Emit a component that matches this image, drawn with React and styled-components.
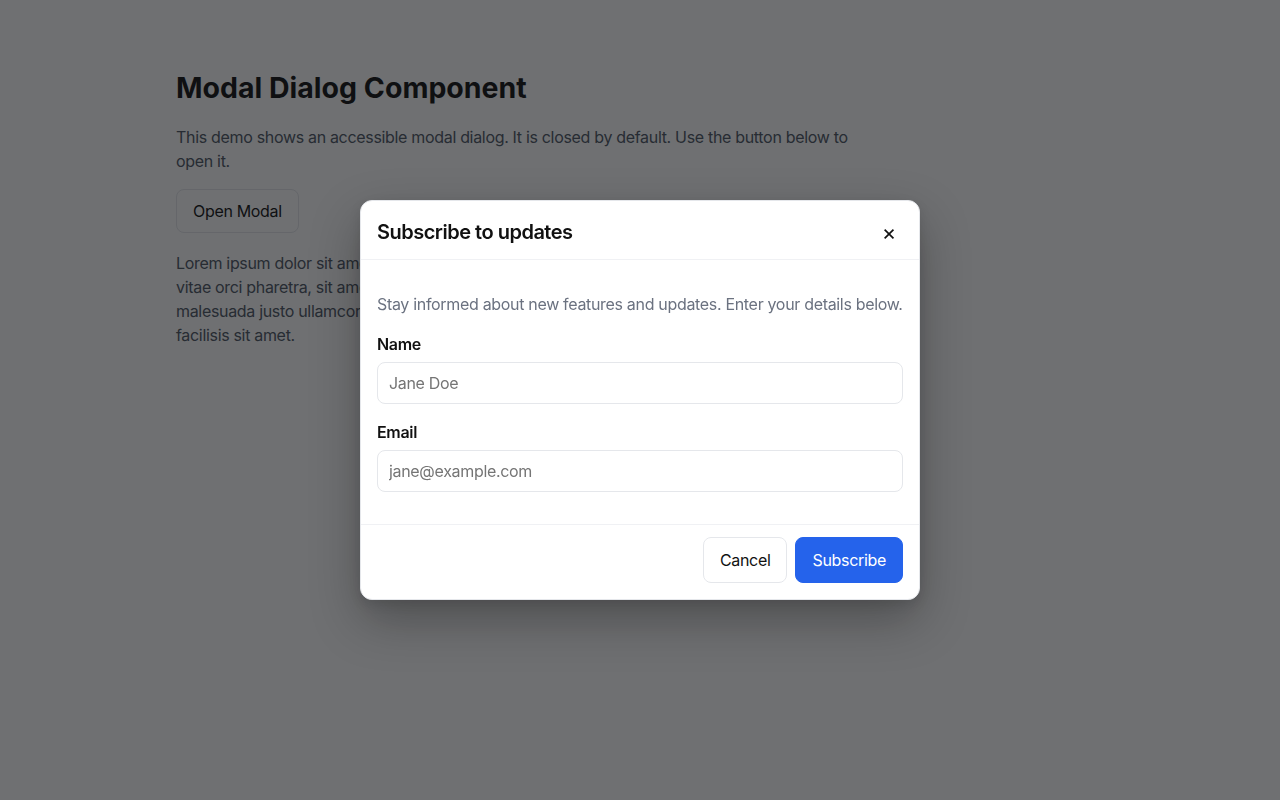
import React, { useState } from 'react'
import styled, { createGlobalStyle } from 'styled-components'

const GlobalStyle = createGlobalStyle`
  * { box-sizing: border-box; }
  html, body {
    margin: 0;
    padding: 0;
    background: #ffffff;
    font-family: Inter, "Liberation Sans", Arial, sans-serif;
    color: #111827;
    letter-spacing: -0.02em;
  }
`

const Page = styled.main`
  max-width: 960px;
  margin: 0 auto;
  padding: 71px 16px 64px;
`

const Title = styled.h1`
  margin: 0 0 20px;
  font-size: 28.5px;
  line-height: 34px;
  font-weight: 700;
  color: #111111;
  letter-spacing: 0;
`

const Text = styled.p`
  max-width: 70ch;
  margin: 0 0 16px;
  font-size: 16px;
  line-height: 24px;
  color: #4b5563;
`

const Button = styled.button`
  display: inline-flex;
  align-items: center;
  justify-content: center;
  height: ${p => (p.$tall ? '46px' : '44px')};
  padding: 0 16px;
  border-radius: 8px;
  border: 1px solid ${p => (p.$primary ? '#2563eb' : '#e5e7eb')};
  background: ${p => (p.$primary ? '#2563eb' : '#ffffff')};
  color: ${p => (p.$primary ? '#ffffff' : '#111111')};
  font-family: inherit;
  font-size: 16px;
  letter-spacing: inherit;
  cursor: pointer;
`

const OpenButton = styled(Button)`
  margin-bottom: 18px;
`

const Overlay = styled.div`
  position: fixed;
  inset: 0;
  display: flex;
  align-items: center;
  justify-content: center;
  background: rgba(15, 16, 20, 0.6);
`

const Dialog = styled.div`
  width: 560px;
  background: #ffffff;
  border: 1px solid #e5e7eb;
  border-radius: 12px;
  box-shadow: 0 20px 50px rgba(0, 0, 0, 0.3), 0 4px 12px rgba(0, 0, 0, 0.1);
  overflow: hidden;
`

const Header = styled.header`
  display: flex;
  align-items: center;
  justify-content: space-between;
  padding: 17px 16px 13px;
  border-bottom: 1px solid #f0f1f4;
`

const DialogTitle = styled.h2`
  margin: 0;
  font-size: 20px;
  line-height: 28px;
  font-weight: 600;
  color: #111111;
  letter-spacing: -0.025em;
`

const CloseButton = styled.button`
  width: 28px;
  height: 28px;
  display: flex;
  align-items: center;
  justify-content: center;
  border: none;
  background: transparent;
  padding: 0;
  color: #111111;
  font-family: inherit;
  font-size: 22px;
  line-height: 1;
  cursor: pointer;
`

const Body = styled.div`
  padding: 32px 16px 16px;
`

const Description = styled.p`
  margin: 0 0 16px;
  font-size: 16px;
  line-height: 24px;
  color: #6b7280;
`

const Field = styled.div`
  display: flex;
  flex-direction: column;
  gap: 6px;
  margin-bottom: 16px;
`

const Label = styled.label`
  font-size: 16px;
  line-height: 24px;
  font-weight: 600;
  color: #111111;
`

const Input = styled.input`
  height: 42px;
  width: 100%;
  padding: 0 11px;
  border: 1px solid #e5e7eb;
  border-radius: 8px;
  font-family: inherit;
  font-size: 16px;
  letter-spacing: inherit;
  color: #111111;
  outline: none;
  &::placeholder {
    color: #757575;
  }
`

const Footer = styled.footer`
  display: flex;
  justify-content: flex-end;
  gap: 8px;
  padding: 12px 16px 16px;
  border-top: 1px solid #f0f1f4;
`

export default function App() {
  const [open, setOpen] = useState(true)

  return (
    <>
      <GlobalStyle />
      <Page>
        <Title>Modal Dialog Component</Title>
        <Text>
          This demo shows an accessible modal dialog. It is closed by default. Use the button below to open it.
        </Text>
        <OpenButton onClick={() => setOpen(true)}>Open Modal</OpenButton>
        <Text>
          Lorem ipsum dolor sit amet, consectetur adipiscing elit. Integer posuere erat a ante dapibus,<br />
          vitae orci pharetra, sit amet tristique lorem. Nullam quis risus eget urna mollis ornare<br />
          malesuada justo ullamcorper, sagittis nisi a, fermentum massa. Maecenas sed diam eget risus<br />
          facilisis sit amet.
        </Text>
      </Page>

      {open && (
        <Overlay>
          <Dialog role="dialog" aria-modal="true" aria-labelledby="dialog-title">
            <Header>
              <DialogTitle id="dialog-title">Subscribe to updates</DialogTitle>
              <CloseButton aria-label="Close" onClick={() => setOpen(false)}>×</CloseButton>
            </Header>
            <Body>
              <Description>Stay informed about new features and updates. Enter your details below.</Description>
              <Field>
                <Label htmlFor="name">Name</Label>
                <Input id="name" placeholder="Jane Doe" />
              </Field>
              <Field>
                <Label htmlFor="email">Email</Label>
                <Input id="email" type="email" placeholder="jane@example.com" />
              </Field>
            </Body>
            <Footer>
              <Button $tall onClick={() => setOpen(false)}>Cancel</Button>
              <Button $tall $primary>Subscribe</Button>
            </Footer>
          </Dialog>
        </Overlay>
      )}
    </>
  )
}
